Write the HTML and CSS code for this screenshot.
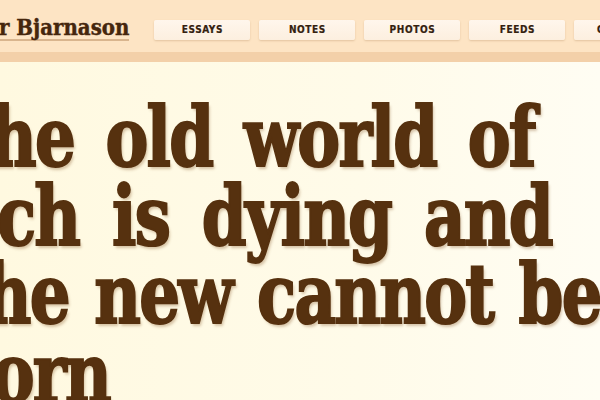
FILE: index.html
```html
<!DOCTYPE html>
<html lang="en">
<head>
<meta charset="utf-8">
<title>Bjarnason</title>
<link rel="stylesheet" href="styles.css">
</head>
<body>
<header class="site-header">
  <a class="logo" href="#">r Bjarnason</a>
  <nav class="nav">
    <a class="nav-btn" href="#">Essays</a>
    <a class="nav-btn" href="#">Notes</a>
    <a class="nav-btn" href="#">Photos</a>
    <a class="nav-btn" href="#">Feeds</a>
    <a class="nav-btn" href="#">Contact</a>
  </nav>
</header>
<main class="main">
  <h1 class="headline">
    <span class="line line-1">he old world of</span>
    <span class="line line-2">ch is dying and</span>
    <span class="line line-3">he new cannot be</span>
    <span class="line line-4">orn</span>
  </h1>
</main>
</body>
</html>
```
FILE: styles.css
```css
html, body {
  margin: 0;
  padding: 0;
  overflow: hidden;
  height: 100%;
}
body {
  background: linear-gradient(to right, #fff9e0 0%, #fffbe9 60%, #fffdf3 100%);
  font-family: "DejaVu Serif", serif;
}
.site-header {
  display: flex;
  align-items: center;
  height: 52px;
  background: #fde4c4;
  border-bottom: 10px solid #f3d0a9;
  white-space: nowrap;
}
.logo {
  font-family: "DejaVu Serif Condensed", "DejaVu Serif", serif;
  font-weight: bold;
  font-size: 22px;
  color: #45260d;
  text-decoration: none;
  border-bottom: 2px solid #d9b58e;
  line-height: 24px;
  margin-left: -1px;
  margin-top: 4px;
  -webkit-text-stroke: 0.4px #45260d;
}
.nav {
  display: flex;
  gap: 9px;
  margin-left: 25px;
  margin-top: 8px;
}
.nav-btn {
  flex: 0 0 auto;
  width: 96px;
  height: 20px;
  line-height: 20px;
  text-align: center;
  font-family: "DejaVu Sans Condensed", "DejaVu Sans", sans-serif;
  font-weight: bold;
  font-size: 10px;
  letter-spacing: 0.6px;
  text-transform: uppercase;
  color: #33210f;
  text-decoration: none;
  background: linear-gradient(to bottom, #fff6ec, #fcefdf);
  border-radius: 2px;
  box-shadow: 0 1px 2px rgba(150, 100, 50, 0.25);
  -webkit-text-stroke: 0.2px #33210f;
}
.main {
  padding-top: 36px;
}
.headline {
  margin: 0 0 0 -3px;
  font-family: "DejaVu Serif Condensed", "DejaVu Serif", serif;
  font-weight: bold;
  font-size: 82px;
  line-height: 78.5px;
  letter-spacing: -2px;
  color: #56310f;
  white-space: nowrap;
  transform: scaleX(0.87);
  transform-origin: 0 0;
  -webkit-text-stroke: 2px #56310f;
  text-shadow: 2px 3px 3px rgba(120, 70, 20, 0.3);
}
.line {
  display: block;
}
.line-1 {
  margin-left: -8px;
  word-spacing: 12.5px;
}
.line-2 {
  word-spacing: 14px;
}
.line-3 {
  margin-left: -14px;
  word-spacing: 5.5px;
}
.line-4 {
  margin-left: -6px;
}
```
